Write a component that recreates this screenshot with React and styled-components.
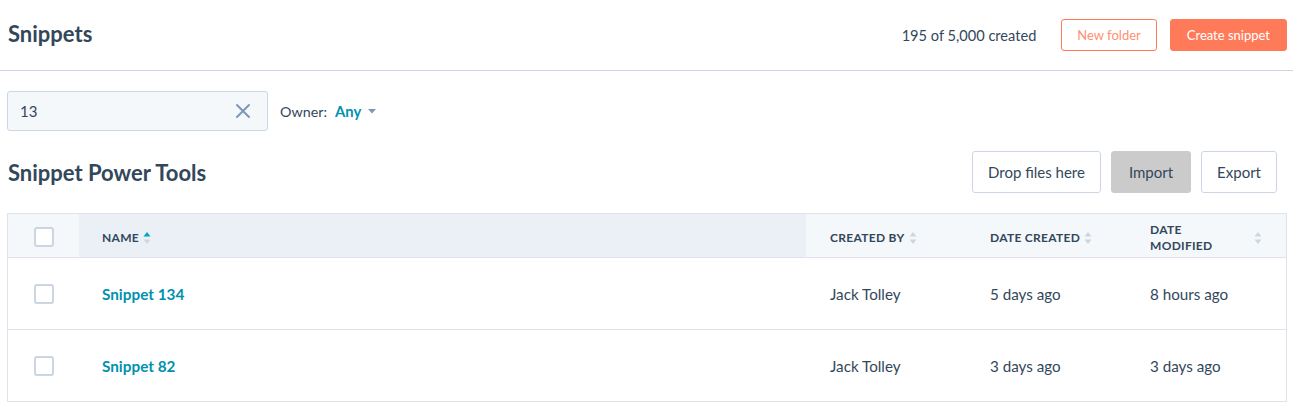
import React from 'react';
import styled, { createGlobalStyle } from 'styled-components';

const GlobalStyle = createGlobalStyle`
  body {
    margin: 0;
    background: #fff;
    font-family: 'Lato', 'Noto Sans', sans-serif;
    color: #33475b;
  }
  * { box-sizing: border-box; }
`;

const rows = [
  { name: 'Snippet 134', by: 'Jack Tolley', created: '5 days ago', modified: '8 hours ago' },
  { name: 'Snippet 82', by: 'Jack Tolley', created: '3 days ago', modified: '3 days ago' },
];

function SortIcon({ active }) {
  return (
    <SortSvg width="8" height="14" viewBox="0 0 8 14">
      <path d="M4 1 L7.5 5.5 H0.5 Z" fill={active ? '#00a4bd' : '#cbd6e2'} />
      <path d="M4 13 L7.5 8.5 H0.5 Z" fill="#cbd6e2" />
    </SortSvg>
  );
}

function App() {
  return (
    <Page>
      <GlobalStyle />
      <TopBar>
        <PageTitle>Snippets</PageTitle>
        <TopActions>
          <Count>195 of 5,000 created</Count>
          <OutlineButton>New folder</OutlineButton>
          <PrimaryButton>Create snippet</PrimaryButton>
        </TopActions>
      </TopBar>

      <Content>
        <FilterRow>
          <SearchBox>
            <SearchInput defaultValue="13" />
            <ClearIcon width="16" height="16" viewBox="0 0 16 16">
              <path d="M2 2 L14 14 M14 2 L2 14" stroke="#7c98b6" strokeWidth="2" strokeLinecap="round" />
            </ClearIcon>
          </SearchBox>
          <OwnerLabel>Owner:</OwnerLabel>
          <OwnerValue>Any</OwnerValue>
          <Caret width="8" height="5" viewBox="0 0 8 5">
            <path d="M0 0 H8 L4 4.5 Z" fill="#7c98b6" />
          </Caret>
        </FilterRow>

        <SectionRow>
          <SectionTitle>Snippet Power Tools</SectionTitle>
          <ToolButtons>
            <ToolButton>Drop files here</ToolButton>
            <ToolButton disabled>Import</ToolButton>
            <ToolButton>Export</ToolButton>
          </ToolButtons>
        </SectionRow>

        <Table>
          <HeadRow>
            <CheckCell head>
              <Checkbox />
            </CheckCell>
            <NameHead>
              <HeadLabel>Name</HeadLabel>
              <SortIcon active />
            </NameHead>
            <HeadCell>
              <HeadLabel>Created by</HeadLabel>
              <SortIcon />
            </HeadCell>
            <HeadCell>
              <HeadLabel>Date created</HeadLabel>
              <SortIcon />
            </HeadCell>
            <HeadCell spread>
              <HeadLabel narrow>Date modified</HeadLabel>
              <SortIcon />
            </HeadCell>
          </HeadRow>
          {rows.map((row, i) => (
            <BodyRow key={i}>
              <CheckCell>
                <Checkbox />
              </CheckCell>
              <NameCell>
                <NameLink>{row.name}</NameLink>
              </NameCell>
              <Cell>{row.by}</Cell>
              <Cell>{row.created}</Cell>
              <Cell>{row.modified}</Cell>
            </BodyRow>
          ))}
        </Table>
      </Content>
    </Page>
  );
}

export default App;

const Page = styled.div`
  width: 100%;
`;

const TopBar = styled.div`
  display: flex;
  align-items: center;
  justify-content: space-between;
  height: 71px;
  padding: 0 6px 0 8px;
  border-bottom: 1px solid #cbd6e2;
`;

const PageTitle = styled.h1`
  margin: 0 0 3px;
  font-size: 22px;
  font-weight: 700;
  color: #33475b;
`;

const TopActions = styled.div`
  display: flex;
  align-items: center;
`;

const Count = styled.span`
  margin-right: 25px;
  font-size: 14.6px;
  color: #33475b;
`;

const OutlineButton = styled.button`
  height: 32px;
  padding: 0 15px;
  margin-right: 13px;
  border: 1px solid #ff7a59;
  border-radius: 3px;
  background: #fff;
  color: #ff8f73;
  font-family: inherit;
  font-size: 13px;
`;

const PrimaryButton = styled.button`
  height: 32px;
  padding: 0 16px;
  border: 1px solid #ff7a59;
  border-radius: 3px;
  background: #ff7a59;
  color: #fff;
  font-family: inherit;
  font-size: 13px;
`;

const Content = styled.div`
  padding: 0 6px 0 7px;
`;

const FilterRow = styled.div`
  display: flex;
  align-items: center;
  margin-top: 20px;
`;

const SearchBox = styled.div`
  display: flex;
  align-items: center;
  width: 261px;
  height: 40px;
  padding: 0 16px 0 10px;
  background: #f5f8fa;
  border: 1px solid #cbd6e2;
  border-radius: 3px;
`;

const SearchInput = styled.input`
  flex: 1;
  min-width: 0;
  border: none;
  outline: none;
  background: transparent;
  font-family: inherit;
  font-size: 15px;
  color: #33475b;
`;

const ClearIcon = styled.svg`
  flex-shrink: 0;
`;

const OwnerLabel = styled.span`
  margin-left: 12px;
  font-size: 14.3px;
  color: #33475b;
`;

const OwnerValue = styled.span`
  margin-left: 8px;
  font-size: 14.8px;
  font-weight: 700;
  color: #0091ae;
`;

const Caret = styled.svg`
  margin-left: 7px;
`;

const SectionRow = styled.div`
  display: flex;
  align-items: center;
  justify-content: space-between;
  margin-top: 20px;
  height: 42px;
`;

const SectionTitle = styled.h2`
  margin: 0 0 0 1px;
  font-size: 22px;
  font-weight: 700;
  color: #33475b;
`;

const ToolButtons = styled.div`
  display: flex;
  gap: 10px;
  margin-right: 10px;
`;

const ToolButton = styled.button`
  height: 42px;
  padding: 0 ${p => (p.disabled ? '17px' : '15px')};
  border: 1px solid ${p => (p.disabled ? '#cbcbcb' : '#cbd6e2')};
  border-radius: 3px;
  background: ${p => (p.disabled ? '#cbcbcb' : '#fff')};
  color: #33475b;
  font-family: inherit;
  font-size: 15px;
`;

const Table = styled.div`
  margin-top: 20px;
  border: 1px solid #dfe3eb;
  border-bottom: none;
`;

const HeadRow = styled.div`
  display: flex;
  height: 44px;
  background: #f5f8fa;
  border-bottom: 1px solid #dfe3eb;
`;

const BodyRow = styled.div`
  display: flex;
  height: 72px;
  border-bottom: 1px solid #dfe3eb;
`;

const CheckCell = styled.div`
  display: flex;
  align-items: center;
  justify-content: center;
  width: 71px;
  flex-shrink: 0;
  padding-top: ${p => (p.head ? '2px' : '0')};
`;

const Checkbox = styled.span`
  display: block;
  width: 20px;
  height: 20px;
  border: 2px solid #cbd6e2;
  border-radius: 3px;
  background: #fff;
`;

const NameHead = styled.div`
  display: flex;
  align-items: center;
  gap: 4px;
  flex: 1;
  padding: 4px 24px 0 23px;
  background: #eaf0f6;
`;

const HeadCell = styled.div`
  display: flex;
  align-items: center;
  justify-content: ${p => (p.spread ? 'space-between' : 'flex-start')};
  gap: 4px;
  width: 160px;
  flex-shrink: 0;
  padding: 4px 24px 0;
`;

const HeadLabel = styled.span`
  max-width: ${p => (p.narrow ? '80px' : 'none')};
  font-size: 12px;
  font-weight: 700;
  line-height: 16px;
  letter-spacing: 0.3px;
  text-transform: uppercase;
  color: #33475b;
`;

const SortSvg = styled.svg`
  flex-shrink: 0;
`;

const NameCell = styled.div`
  display: flex;
  align-items: center;
  flex: 1;
  padding: 0 24px 0 23px;
`;

const NameLink = styled.a`
  font-size: 15.3px;
  font-weight: 700;
  color: #0091ae;
  cursor: pointer;
`;

const Cell = styled.div`
  display: flex;
  align-items: center;
  width: 160px;
  flex-shrink: 0;
  padding: 0 24px;
  font-size: 15.2px;
  color: #33475b;
`;
